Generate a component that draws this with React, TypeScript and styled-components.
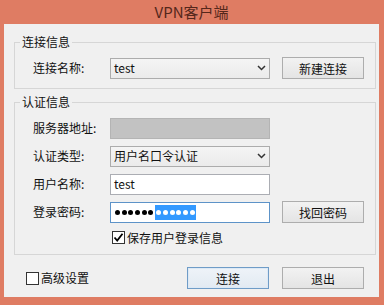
import React from "react";
import styled, { createGlobalStyle } from "styled-components";

const Global = createGlobalStyle`
  html, body { margin: 0; padding: 0; width: 384px; height: 305px; overflow: hidden; }
  body { font-family: "Noto Sans CJK SC", "Noto Sans", sans-serif; }
  * { box-sizing: border-box; }
`;

const Window = styled.div`
  width: 384px;
  height: 305px;
  background: #df7c63;
  display: flex;
  flex-direction: column;
  padding: 0 5px 8px 4px;
`;

const TitleBar = styled.div`
  height: 24px;
  display: flex;
  align-items: center;
  justify-content: center;
  font-size: 15px;
  color: #55271b;
  padding-bottom: 1px;
`;

const Client = styled.div`
  flex: 1;
  background: #f0f0f0;
  display: flex;
  flex-direction: column;
  padding: 10px 3px 7px 10px;
  font-size: 12px;
  color: #111;
`;

const Group = styled.fieldset<{ $gapTop?: number }>`
  margin: ${(p) => p.$gapTop ?? 0}px 0 0 0;
  padding: 0;
  border: 1px solid #d6d6d6;
  min-width: 0;
`;

const Legend = styled.legend`
  margin-left: 5px;
  padding: 0 2px;
  font-size: 12px;
  line-height: 16px;
  color: #111;
`;

const Body = styled.div<{ $top: number; $bottom: number }>`
  display: flex;
  flex-direction: column;
  gap: 6px;
  padding: ${(p) => p.$top}px 0 ${(p) => p.$bottom}px 18px;
`;

const Row = styled.div`
  display: flex;
  align-items: center;
  height: 22px;
`;

const Label = styled.div`
  width: 77px;
  flex: none;
  line-height: 16px;
`;

const Field = styled.div<{ $variant?: "text" | "disabled" | "focus" | "select" }>`
  width: 160px;
  height: 21px;
  flex: none;
  display: flex;
  align-items: center;
  padding: 0 3px;
  font-size: 12px;
  line-height: 16px;
  border: 1px solid
    ${(p) =>
      p.$variant === "disabled"
        ? "#b4b4b4"
        : p.$variant === "focus"
        ? "#5d93c8"
        : p.$variant === "select"
        ? "#acacac"
        : "#abadb3"};
  background: ${(p) =>
    p.$variant === "disabled"
      ? "#c2c2c2"
      : p.$variant === "select"
      ? "linear-gradient(#f4f4f4, #ebebeb)"
      : "#ffffff"};
`;

const SelectText = styled.span`
  flex: 1;
`;

const Button = styled.button<{ $default?: boolean }>`
  width: 82px;
  height: 22px;
  flex: none;
  margin-left: ${(p) => (p.$default ? 0 : 12)}px;
  padding: 0;
  font-family: "Noto Sans CJK SC", "Noto Sans", sans-serif;
  font-size: 12px;
  color: #111;
  border: 1px solid ${(p) => (p.$default ? "#6f9cc7" : "#adadad")};
  background: ${(p) =>
    p.$default ? "linear-gradient(#eef3f8, #e2eaf2)" : "linear-gradient(#f2f2f2, #e4e4e4)"};
  box-shadow: ${(p) => (p.$default ? "inset 0 0 0 1px #dde9f5" : "none")};
`;

const CheckRow = styled.label<{ $indent: number }>`
  display: flex;
  align-items: center;
  height: 17px;
  padding-left: ${(p) => p.$indent}px;
  gap: 2px;
  line-height: 16px;
`;

const Box = styled.span`
  width: 13px;
  height: 13px;
  flex: none;
  border: 1px solid #333;
  background: #fff;
  display: flex;
  align-items: center;
  justify-content: center;
`;

const PwdText = styled.div`
  display: flex;
  align-items: center;
  height: 15px;
  gap: 1.7px;
  padding-left: 1px;
`;

const Sel = styled.div`
  display: flex;
  align-items: center;
  gap: 1.7px;
  height: 15px;
  background: #3399ff;
  padding: 0 1px;
`;

const Dot = styled.span<{ $light?: boolean }>`
  width: 5px;
  height: 5px;
  border-radius: 50%;
  flex: none;
  background: ${(p) => (p.$light ? "#ffffff" : "#000000")};
`;

const BottomRow = styled.div`
  margin-top: 12px;
  display: flex;
  align-items: center;
  padding: 0 12px 0 12px;
`;

const Spacer = styled.div`
  flex: 1;
`;

const ButtonPair = styled.div`
  display: flex;
  gap: 1px;
`;

const Chevron = () => (
  <svg width="9" height="6" viewBox="0 0 9 6">
    <path d="M1 1 L4.5 4.5 L8 1" fill="none" stroke="#333" strokeWidth="1.5" />
  </svg>
);

const Check = () => (
  <svg width="11" height="11" viewBox="0 0 11 11">
    <path d="M1.5 5.5 L4.2 8.5 L9.5 1.8" fill="none" stroke="#000" strokeWidth="1.8" />
  </svg>
);

export default function App() {
  return (
    <>
      <Global />
      <Window>
        <TitleBar>VPN客户端</TitleBar>
        <Client>
          <Group>
            <Legend>连接信息</Legend>
            <Body $top={7} $bottom={9}>
              <Row>
                <Label>连接名称:</Label>
                <Field $variant="select">
                  <SelectText>test</SelectText>
                  <Chevron />
                </Field>
                <Button>新建连接</Button>
              </Row>
            </Body>
          </Group>
          <Group $gapTop={5}>
            <Legend>认证信息</Legend>
            <Body $top={7} $bottom={8}>
              <Row>
                <Label>服务器地址:</Label>
                <Field $variant="disabled" />
              </Row>
              <Row>
                <Label>认证类型:</Label>
                <Field $variant="select">
                  <SelectText>用户名口令认证</SelectText>
                  <Chevron />
                </Field>
              </Row>
              <Row>
                <Label>用户名称:</Label>
                <Field $variant="text">test</Field>
              </Row>
              <Row>
                <Label>登录密码:</Label>
                <Field $variant="focus">
                  <PwdText>
                    {Array.from({ length: 6 }).map((_, i) => (
                      <Dot key={i} />
                    ))}
                    <Sel>
                      {Array.from({ length: 6 }).map((_, i) => (
                        <Dot key={i} $light />
                      ))}
                    </Sel>
                  </PwdText>
                </Field>
                <Button>找回密码</Button>
              </Row>
              <CheckRow $indent={79}>
                <Box>
                  <Check />
                </Box>
                保存用户登录信息
              </CheckRow>
            </Body>
          </Group>
          <BottomRow>
            <CheckRow $indent={0}>
              <Box />
              高级设置
            </CheckRow>
            <Spacer />
            <ButtonPair>
              <Button $default>连接</Button>
              <Button>退出</Button>
            </ButtonPair>
          </BottomRow>
        </Client>
      </Window>
    </>
  );
}
